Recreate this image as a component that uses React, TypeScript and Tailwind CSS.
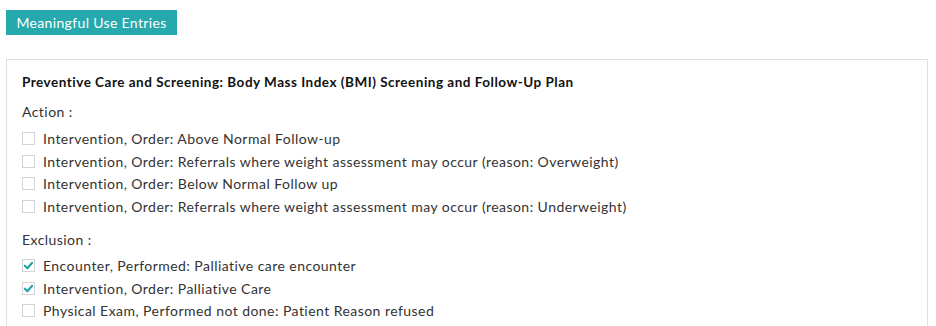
const ACTIONS = [
  { label: "Intervention, Order: Above Normal Follow-up", checked: false },
  { label: "Intervention, Order: Referrals where weight assessment may occur (reason: Overweight)", checked: false },
  { label: "Intervention, Order: Below Normal Follow up", checked: false },
  { label: "Intervention, Order: Referrals where weight assessment may occur (reason: Underweight)", checked: false },
];

const EXCLUSIONS = [
  { label: "Encounter, Performed: Palliative care encounter", checked: true },
  { label: "Intervention, Order: Palliative Care", checked: true },
  { label: "Physical Exam, Performed not done: Patient Reason refused", checked: false },
];

function Row({ label, checked }: { label: string; checked: boolean }) {
  return (
    <div className="flex h-[22.5px] items-center gap-[8px]">
      <span className="flex h-[13px] w-[13px] shrink-0 items-center justify-center border border-[#d4d4d4] bg-white">
        {checked && (
          <svg viewBox="0 0 12 12" className="h-[11px] w-[11px]">
            <path d="M2 6.2 L4.8 9 L10 3" fill="none" stroke="#22a2a6" strokeWidth="2.2" strokeLinecap="round" strokeLinejoin="round" />
          </svg>
        )}
      </span>
      <span>{label}</span>
    </div>
  );
}

export default function App() {
  return (
    <div className="h-[326px] overflow-hidden bg-white px-[6px] pt-[10px] text-[14px] tracking-[0.45px] text-[#333] [font-family:Lato,'Noto_Sans',sans-serif]">
      <div className="inline-flex h-[25px] w-[171px] items-center justify-center bg-[#26a9ad] text-[14px] tracking-[0.35px] text-white">
        Meaningful Use Entries
      </div>
      <div className="mt-[24px] w-[922px] border border-[#e0e0e0] px-[15px] pt-[12px] pb-[16px]">
        <div className="text-[13.5px] font-bold tracking-[0.5px] text-[#111]">
          Preventive Care and Screening: Body Mass Index (BMI) Screening and Follow-Up Plan
        </div>
        <div className="mt-[9px] mb-[5px]">Action :</div>
        {ACTIONS.map((a) => (
          <Row key={a.label} {...a} />
        ))}
        <div className="mt-[12px] mb-[4px]">Exclusion :</div>
        {EXCLUSIONS.map((a) => (
          <Row key={a.label} {...a} />
        ))}
      </div>
    </div>
  );
}
